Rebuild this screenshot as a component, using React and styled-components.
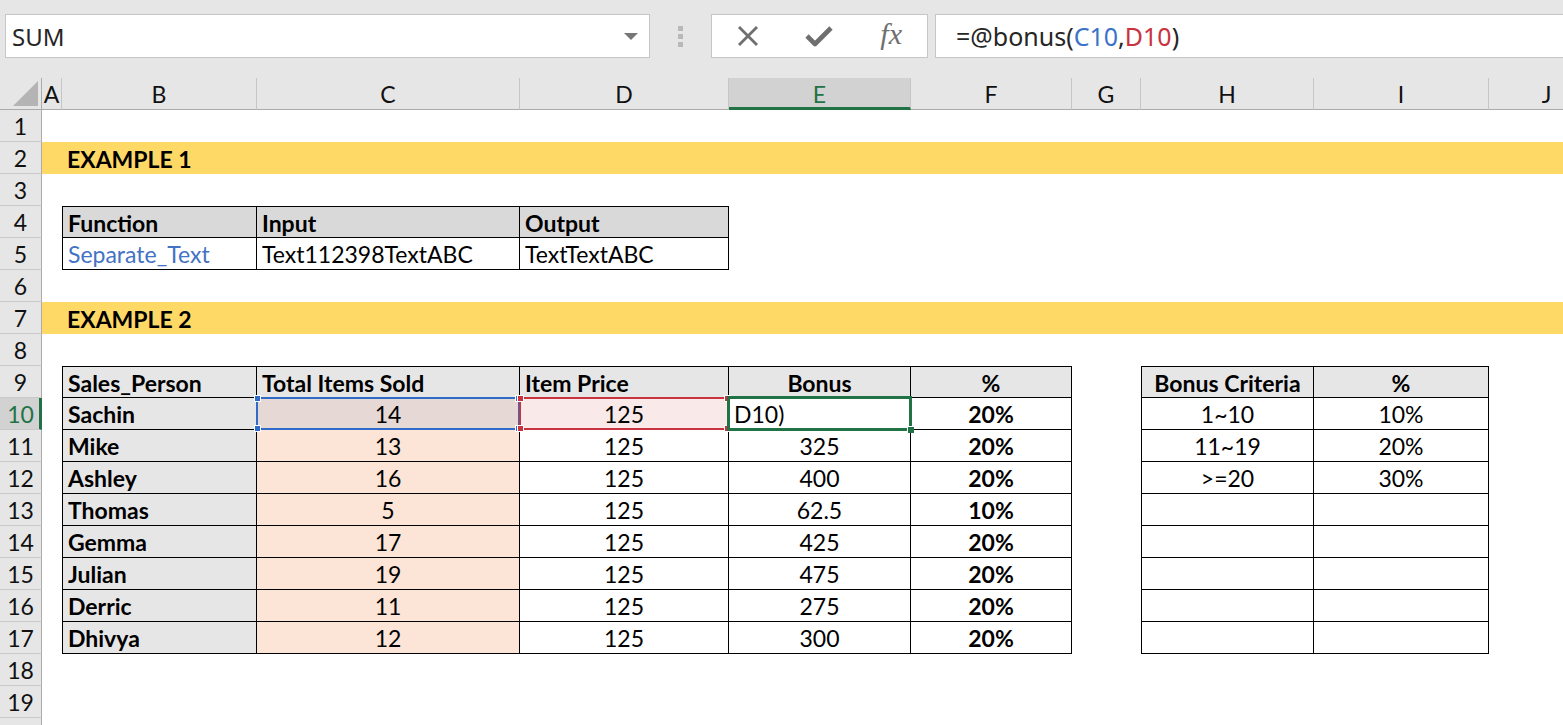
import React from "react"
import styled, { createGlobalStyle } from "styled-components"

const GlobalStyle = createGlobalStyle`
  html, body {
    margin: 0;
    padding: 0;
    background: #fff;
  }
  body {
    overflow: hidden;
    font-family: Lato, "Liberation Sans", sans-serif;
  }
`

const Window = styled.div`
  width: 1563px;
  height: 725px;
  overflow: hidden;
  background: #fff;
`

// ---- formula bar ----
const FormulaBar = styled.div`
  height: 78px;
  box-sizing: border-box;
  background: #e6e6e6;
  display: flex;
  align-items: flex-start;
  padding: 14px 0 0 5px;
  font-family: "Noto Sans", "Open Sans", sans-serif;
  font-size: 24px;
  color: #262626;
`
const NameBox = styled.div`
  width: 645px;
  height: 44px;
  box-sizing: border-box;
  background: #fff;
  border: 1px solid #c6c6c6;
  display: flex;
  align-items: center;
  justify-content: space-between;
  padding: 0 11px 0 6px;
`
const DropArrow = styled.span`
  width: 0;
  height: 0;
  border-left: 7px solid transparent;
  border-right: 7px solid transparent;
  border-top: 7px solid #777;
`
const Dots = styled.div`
  display: flex;
  flex-direction: column;
  gap: 3px;
  margin: 12px 28px 0 28px;
  span {
    display: block;
    width: 5px;
    height: 5px;
    background: #b9b9b9;
  }
`
const FxBox = styled.div`
  width: 217px;
  height: 44px;
  box-sizing: border-box;
  background: #fff;
  border: 1px solid #c6c6c6;
  display: grid;
  grid-template-columns: repeat(3, 1fr);
  align-items: center;
  justify-items: center;
`
const FxText = styled.span`
  font-family: "Liberation Serif", "DejaVu Serif", serif;
  font-style: italic;
  font-size: 30px;
  color: #6f6f6f;
  margin-top: -4px;
`
const FormulaInput = styled.div`
  flex: 1;
  height: 44px;
  box-sizing: border-box;
  margin-left: 7px;
  margin-right: -2px;
  background: #fff;
  border: 1px solid #c6c6c6;
  display: flex;
  align-items: center;
  padding-left: 20px;
  font-size: 25px;
  white-space: nowrap;
`
const Ref = styled.span`
  color: ${p => p.$c};
`

// ---- sheet ----
const Sheet = styled.div`
  display: grid;
  grid-template-columns: 42px 20px 195px 263px 209px 182px 161px 69px 173px 175px 116px;
  grid-auto-rows: 32px;
  width: 1605px;
`
const Corner = styled.div`
  background: #e6e6e6;
  border-right: 1px solid #ababab;
  border-bottom: 1px solid #ababab;
  box-sizing: border-box;
  display: flex;
  align-items: flex-end;
  justify-content: flex-end;
  padding: 0 3px 3px 0;
  &::after {
    content: "";
    width: 25px;
    height: 25px;
    background: #b4b4b4;
    clip-path: polygon(100% 0, 100% 100%, 0 100%);
  }
`
const ColHead = styled.div`
  box-sizing: border-box;
  background: ${p => p.$active ? "#d2d2d2" : "#e6e6e6"};
  border-right: 1px solid #c6c6c6;
  border-bottom: ${p => p.$active ? "3px solid #217346" : "1px solid #ababab"};
  display: flex;
  align-items: center;
  justify-content: center;
  padding-top: ${p => p.$active ? "2px" : "0"};
  font-size: 23px;
  color: ${p => p.$active ? "#217346" : "#111"};
`
const RowHead = styled.div`
  box-sizing: border-box;
  background: ${p => p.$active ? "#d2d2d2" : "#e6e6e6"};
  border-right: ${p => p.$active ? "3px solid #217346" : "1px solid #ababab"};
  border-bottom: 1px solid #c9c9c9;
  display: flex;
  align-items: center;
  justify-content: center;
  padding-left: ${p => p.$active ? "2px" : "0"};
  font-size: 23px;
  color: ${p => p.$active ? "#217346" : "#111"};
`
const line = "1px solid #000"
const Cell = styled.div`
  position: relative;
  box-sizing: border-box;
  display: flex;
  align-items: center;
  justify-content: ${p => p.$center ? "center" : "flex-start"};
  padding: 1px 5px 0;
  background: ${p => p.$bg || "#fff"};
  color: ${p => p.$color || "#000"};
  font-weight: ${p => p.$bold ? 700 : 400};
  font-size: 23px;
  white-space: nowrap;
  border-top: ${p => p.$bt ? line : "none"};
  border-left: ${p => p.$bl ? line : "none"};
  border-right: ${p => p.$br ? line : "none"};
  border-bottom: ${p => p.$bb ? line : "none"};
`
const selColors = { blue: "#2f6bc8", red: "#c8333f" }
const RangeBox = styled.div`
  position: absolute;
  top: -1px;
  left: -1px;
  right: -1px;
  bottom: -1px;
  border: 2px solid ${p => selColors[p.$kind]};
  z-index: 2;
  pointer-events: none;
`
const Knob = styled.span`
  position: absolute;
  width: 5px;
  height: 5px;
  background: ${p => selColors[p.$kind]};
  border: 1px solid #fff;
  ${p => p.$top ? "top: -4px;" : "bottom: -4px;"}
  ${p => p.$left ? "left: -4px;" : "right: -4px;"}
`
const ActiveBox = styled.div`
  position: absolute;
  top: -2px;
  left: -2px;
  right: -2px;
  bottom: -2px;
  border: 3px solid #217346;
  z-index: 3;
  pointer-events: none;
`
const FillHandle = styled.span`
  position: absolute;
  right: -5px;
  bottom: -5px;
  width: 6px;
  height: 6px;
  background: #217346;
  border-left: 1px solid #fff;
  border-top: 1px solid #fff;
`

const COLS = ["A", "B", "C", "D", "E", "F", "G", "H", "I", "J"]
const ACTIVE_COL = "E"
const ACTIVE_ROW = 10
const LAST_LABELLED_ROW = 19
const GREY = "#e7e6e6"
const PEACH = "#fce4d6"

const sales = [
  ["Sachin", "14", "125", "D10)", "20%"],
  ["Mike", "13", "125", "325", "20%"],
  ["Ashley", "16", "125", "400", "20%"],
  ["Thomas", "5", "125", "62.5", "10%"],
  ["Gemma", "17", "125", "425", "20%"],
  ["Julian", "19", "125", "475", "20%"],
  ["Derric", "11", "125", "275", "20%"],
  ["Dhivya", "12", "125", "300", "20%"],
]
const criteria = [["1~10", "10%"], ["11~19", "20%"], [">=20", "30%"]]

const tables = [
  { rows: [4, 5], cols: ["B", "C", "D"] },
  { rows: [9, 17], cols: ["B", "C", "D", "E", "F"] },
  { rows: [9, 17], cols: ["H", "I"] },
]

// builds the content + look of one cell
function cellSpec(r, c) {
  let s = {}
  if (r === 2 || r === 7) {
    s.bg = "#ffd966"
    if (c === "B") s = { ...s, v: r === 2 ? "EXAMPLE 1" : "EXAMPLE 2", bold: true }
  }
  if (r === 4 && "BCD".includes(c)) {
    s = { bg: "#d9d9d9", bold: true, v: { B: "Function", C: "Input", D: "Output" }[c] }
  }
  if (r === 5) {
    if (c === "B") s = { v: "Separate_Text", color: "#4472c4" }
    if (c === "C") s = { v: "Text112398TextABC" }
    if (c === "D") s = { v: "TextTextABC" }
  }
  if (r === 9) {
    const heads = { B: "Sales_Person", C: "Total Items Sold", D: "Item Price", E: "Bonus", F: "%", H: "Bonus Criteria", I: "%" }
    if (heads[c]) s = { v: heads[c], bold: true, bg: GREY, center: "EFHI".includes(c) }
  }
  if (r >= 10 && r <= 17) {
    const row = sales[r - 10]
    if (c === "B") s = { v: row[0], bold: true, bg: GREY }
    if (c === "C") s = { v: row[1], center: true, bg: PEACH }
    if (c === "D") s = { v: row[2], center: true }
    if (c === "E") s = { v: row[3], center: r !== 10 }
    if (c === "F") s = { v: row[4], center: true, bold: true }
    const crit = criteria[r - 10]
    if (crit && c === "H") s = { v: crit[0], center: true }
    if (crit && c === "I") s = { v: crit[1], center: true }
  }
  if (r === 10 && c === "C") s = { ...s, bg: "#e6d9d5", range: "blue" }
  if (r === 10 && c === "D") s = { ...s, bg: "#f9e9e9", range: "red" }
  if (r === 10 && c === "E") s = { ...s, active: true }

  tables.forEach(t => {
    if (r >= t.rows[0] && r <= t.rows[t.rows.length - 1] && t.cols.includes(c)) {
      s.br = true
      s.bb = true
      if (r === t.rows[0]) s.bt = true
      if (c === t.cols[0]) s.bl = true
    }
  })
  return s
}

const XIcon = () => (
  <svg width="24" height="22" viewBox="0 0 24 22">
    <path d="M3 2 L21 20 M21 2 L3 20" stroke="#6f6f6f" strokeWidth="2.8" fill="none" />
  </svg>
)
const CheckIcon = () => (
  <svg width="28" height="22" viewBox="0 0 28 22">
    <path d="M2 11 L10 19 L26 3" stroke="#6f6f6f" strokeWidth="4.6" fill="none" strokeLinejoin="round" />
  </svg>
)

export default function App() {
  const rows = Array.from({ length: 20 }, (_, i) => i + 1)
  return (
    <Window>
      <GlobalStyle />
      <FormulaBar>
        <NameBox>
          <span>SUM</span>
          <DropArrow />
        </NameBox>
        <Dots><span /><span /><span /></Dots>
        <FxBox>
          <XIcon />
          <CheckIcon />
          <FxText>fx</FxText>
        </FxBox>
        <FormulaInput>
          =@bonus(<Ref $c="#3a73c9">C10</Ref>,<Ref $c="#c8333f">D10</Ref>)
        </FormulaInput>
      </FormulaBar>
      <Sheet>
        <Corner />
        {COLS.map(c => (
          <ColHead key={c} $active={c === ACTIVE_COL}>{c}</ColHead>
        ))}
        {rows.map(r => (
          <React.Fragment key={r}>
            <RowHead $active={r === ACTIVE_ROW}>{r <= LAST_LABELLED_ROW ? r : ""}</RowHead>
            {COLS.map(c => {
              const s = cellSpec(r, c)
              return (
                <Cell
                  key={c}
                  $bg={s.bg}
                  $bold={s.bold}
                  $center={s.center}
                  $color={s.color}
                  $bt={s.bt}
                  $bl={s.bl}
                  $br={s.br}
                  $bb={s.bb}
                >
                  {s.v}
                  {s.range && (
                    <RangeBox $kind={s.range}>
                      <Knob $kind={s.range} $top $left />
                      <Knob $kind={s.range} $top />
                      <Knob $kind={s.range} $left />
                      <Knob $kind={s.range} />
                    </RangeBox>
                  )}
                  {s.active && (
                    <ActiveBox>
                      <FillHandle />
                    </ActiveBox>
                  )}
                </Cell>
              )
            })}
          </React.Fragment>
        ))}
      </Sheet>
    </Window>
  )
}
